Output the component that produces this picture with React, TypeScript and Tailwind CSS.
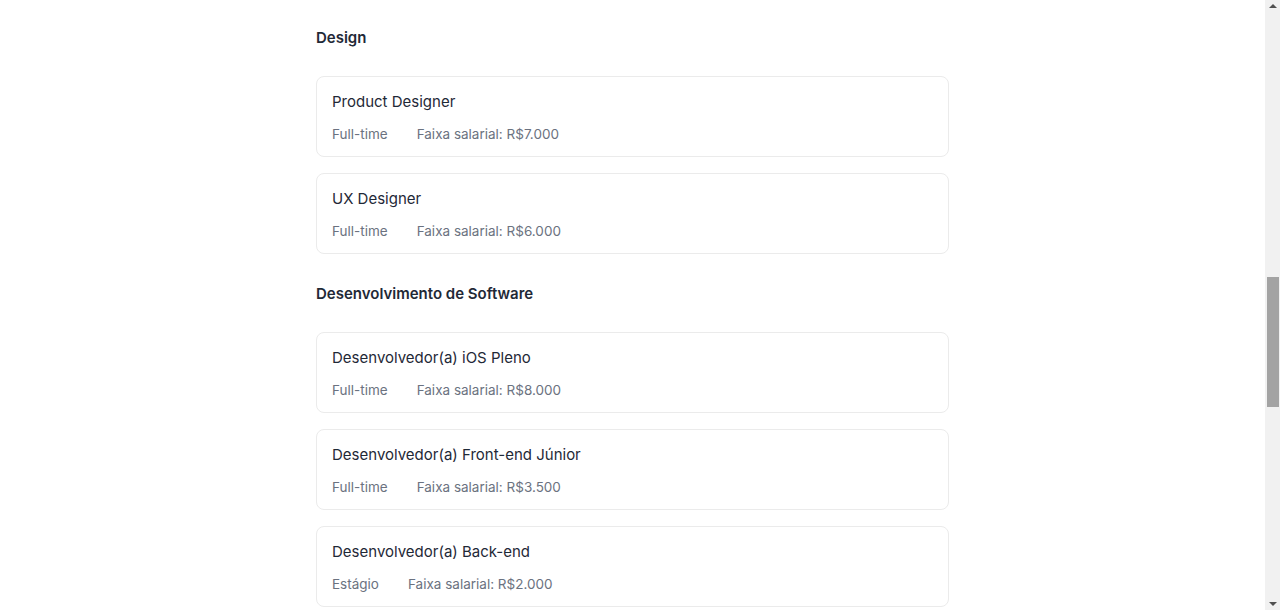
const sections = [
  {
    title: "Design",
    jobs: [
      { name: "Product Designer", type: "Full-time", salary: "R$7.000" },
      { name: "UX Designer", type: "Full-time", salary: "R$6.000" },
    ],
  },
  {
    title: "Desenvolvimento de Software",
    jobs: [
      { name: "Desenvolvedor(a) iOS Pleno", type: "Full-time", salary: "R$8.000" },
      { name: "Desenvolvedor(a) Front-end Júnior", type: "Full-time", salary: "R$3.500" },
      { name: "Desenvolvedor(a) Back-end", type: "Estágio", salary: "R$2.000" },
    ],
  },
];

function JobCard({ name, type, salary }: { name: string; type: string; salary: string }) {
  return (
    <div className="rounded-lg border border-[#ebebeb] bg-white px-[15px] pt-[15px] pb-[12px]">
      <h3 className="text-[15px] leading-5 text-[#1f2937]">{name}</h3>
      <div className="mt-3 flex gap-[29px] text-[13.5px] leading-5 text-[#6b7280]">
        <span>{type}</span>
        <span>Faixa salarial: {salary}</span>
      </div>
    </div>
  );
}

function FakeScrollbar() {
  return (
    <div className="flex h-full w-[15px] shrink-0 flex-col items-center bg-[#f1f1f1]">
      <div className="mt-[4px] h-0 w-0 border-x-[4px] border-b-[4px] border-x-transparent border-b-[#505050]" />
      <div className="mt-[269px] h-[130px] w-[12px] bg-[#a3a3a3]" />
      <div className="mt-auto mb-[4px] h-0 w-0 border-x-[4px] border-t-[4px] border-x-transparent border-t-[#505050]" />
    </div>
  );
}

export default function App() {
  return (
    <div
      className="flex h-[610px] w-full overflow-hidden bg-white"
      style={{ fontFamily: "Inter, 'Noto Sans', sans-serif" }}
    >
      <main className="flex-1 overflow-hidden">
        <div className="mx-auto flex w-[633px] flex-col gap-7 pt-[26px]">
          {sections.map((s) => (
            <section key={s.title}>
              <h2 className="mb-[26px] text-[15px] leading-6 font-semibold text-[#1f2937]">
                {s.title}
              </h2>
              <div className="flex flex-col gap-4">
                {s.jobs.map((j) => (
                  <JobCard key={j.name} {...j} />
                ))}
              </div>
            </section>
          ))}
        </div>
      </main>
      <FakeScrollbar />
    </div>
  );
}
